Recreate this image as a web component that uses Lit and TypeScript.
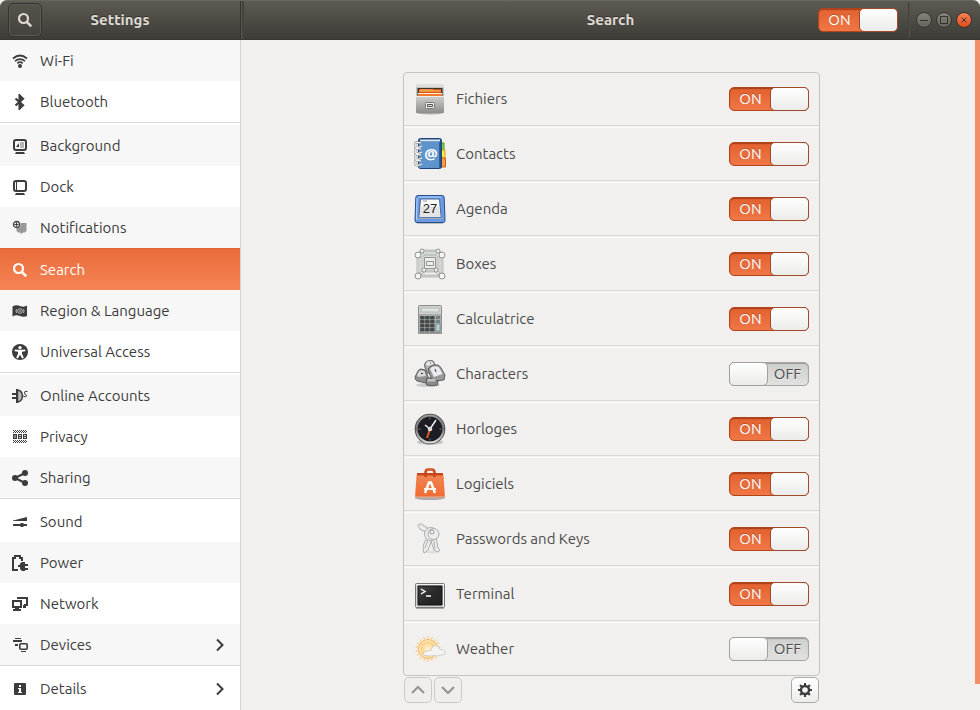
import { LitElement, html, css, svg, nothing, TemplateResult } from "lit";
import { customElement, property } from "lit/decorators.js";
import { classMap } from "lit/directives/class-map.js";

const monitor = svg`<rect x="2" y="2" width="12" height="10" rx="2" fill="none" stroke="currentColor" stroke-width="2"/><path d="M4 14h8l1 2H3z" fill="currentColor"/>`;

const magnifier = svg`<circle cx="6.500" cy="6.500" r="4.500" fill="none" stroke="currentColor" stroke-width="2.200"/><path d="M9.800 9.800L14.300 14.300" stroke="currentColor" stroke-width="2.600"/>`;

const dots: number[][] = [];
for (let y = 0; y < 3; y++) for (let x = 0; x < 14; x++) if ((x + y) % 2 === 0) dots.push([x + 1, y]);

const glyphs: Record<string, TemplateResult> = {
  search: magnifier,
  wifi: svg`<g fill="none" stroke="currentColor" stroke-width="1.700"><path d="M1 5.500Q8 -.5 15 5.500"/><path d="M3 8.200Q8 4 13 8.200"/><path d="M5.300 10.300Q8 8 10.700 10.300"/></g><circle cx="8" cy="13" r="2" fill="currentColor"/>`,
  bluetooth: svg`<path d="M3.500 4.500L11 11.300L8 14V2L11 4.700L3.500 11.500" fill="none" stroke="currentColor" stroke-width="2.200"/><path d="M6.500 0l2.500 1v14l-2.500 1z" fill="currentColor"/>`,
  background: svg`${monitor}<path d="M8 4h4v6H8z" fill="#b5b5b5"/><path d="M4 9l3-4v4z" fill="currentColor"/><path d="M7.500 4v6" stroke="#fff"/>`,
  dock: svg`${monitor}<path d="M4 3h1v8H4z" fill="currentColor"/>`,
  notifications: svg`<path d="M6 3h8.500v8l-1.500 1.500h-2L9.500 14 8 12.500H6L4.500 11V8.500A4.500 4.500 0 0 0 8.500 3z" fill="#999"/><circle cx="4.500" cy="4.500" r="3" fill="#fff" stroke="currentColor" stroke-width="1.300"/><path d="M4.500 2.500v4M2.500 4.500h4" stroke="currentColor" stroke-width="1.200"/>`,
  region: svg`<path d="M.5 3.500Q4 1.500 8 3T15 2.500V13Q12 14.500 8 13T.5 13.500z" fill="currentColor"/><g fill="none" stroke="#d8d8d8" stroke-width=".8"><circle cx="8" cy="8" r="2.300"/><path d="M4.500 6Q3.500 8 4.500 10M11.500 6Q12.500 8 11.500 10"/></g><circle cx="8" cy="8" r=".8" fill="#d8d8d8"/>`,
  access: svg`<circle cx="8" cy="8" r="8" fill="currentColor"/><circle cx="8" cy="3.600" r="1.700" fill="#fff"/><path d="M2.700 5.500L6 5.800h4l3.300-.3v1.700L10 7.800v2l1.800 4-1.600.7L8 10.700l-2.200 3.800-1.600-.7L6 9.800v-2L2.700 7.200z" fill="#fff"/>`,
  accounts: svg`<path d="M0 5h5v2H0zM0 9h5v2H0zM4 1h2v14H4z" fill="currentColor"/><path d="M5.500 2C12 3 12 13 5.500 14z" fill="#bbb" stroke="currentColor" stroke-width="1.400"/><path d="M15.500 3.500Q12 2.500 12.500 5T15 7.500Q14 10 11 8" fill="none" stroke="currentColor"/>`,
  privacy: svg`<g fill="currentColor" shape-rendering="crispEdges">${dots.map(([x, y]) => svg`<rect x=${x} y=${y + 1} width="1" height="1"/><rect x=${x} y=${y + 11} width="1" height="1"/>`)}<path d="M1 5h4v5H1zM6 5h4v5H6zM11 5h4v5h-4z"/></g><path d="M3 6v3M7 6.500h2M7 8.500h2M12 6.500h2M12 8.500h2" stroke="#fff" stroke-width=".8"/>`,
  sharing: svg`<path d="M13 3L3 8l10 5" fill="none" stroke="currentColor" stroke-width="2"/><g fill="currentColor"><circle cx="3" cy="8" r="3"/><circle cx="13" cy="3" r="3"/><circle cx="13" cy="13" r="3"/></g>`,
  sound: svg`<path d="M1 6.500L15 3v4H1zM1 10h14v2H1zM8 10l1-1h2l1 1v2l-1 1H9l-1-1z" fill="currentColor"/>`,
  power: svg`<path d="M6 15H1V3h2V1h5v2h2v3" fill="none" stroke="currentColor" stroke-width="2"/><path d="M6 10h2V8.500L10 7h3v2h3v2h-3v2h3v2h-3v1h-3l-2-2v-2H6z" fill="currentColor"/>`,
  network: svg`<path d="M6 3V2h9v7h-3" fill="none" stroke="currentColor" stroke-width="2"/><path d="M11 9h2v1h1v2h-3z" fill="currentColor"/><rect x="1" y="5" width="8" height="6" fill="none" stroke="currentColor" stroke-width="2"/><path d="M3 12h4v1h2v2H1v-2h2z" fill="currentColor"/>`,
  devices: svg`<path d="M3 1h6v1H3zM1 3h9v2H7V4.500 5H1zM3 7h3v2H3zM9 14h5v1H9z" fill="currentColor"/><rect x="7.800" y="6.800" width="7.400" height="5.400" rx="1" fill="none" stroke="currentColor" stroke-width="1.600"/>`,
  details: svg`<rect x="2" y="2" width="12" height="12" rx="1" fill="currentColor"/><path d="M7 4h2v2H7zM6 7h3v4h1v1H6v-1h1V8H6z" fill="#fff"/>`,
  next: svg`<path d="M5 2.500L10.500 8 5 13.500" fill="none" stroke="currentColor" stroke-width="2"/>`,
  up: svg`<path d="M2 11l6-6 6 6" fill="none" stroke="currentColor" stroke-width="2"/>`,
  down: svg`<path d="M2 5l6 6 6-6" fill="none" stroke="currentColor" stroke-width="2"/>`,
  gear: svg`<circle cx="8" cy="8" r="4" fill="none" stroke="currentColor" stroke-width="2.400"/><g stroke="currentColor" stroke-width="2">${[0, 45, 90, 135, 180, 225, 270, 315].map(a => svg`<path d="M8 1v2.800" transform="rotate(${a} 8 8)"/>`)}</g>`,
};

const pads = [0, 1, 2, 3].flatMap(r => [0, 1, 2].map(c => [6 + c * 5, 13 + r * 4]));

const apps: Record<string, TemplateResult> = {
  files: svg`<defs><linearGradient id="f" x2="0" y2="1"><stop stop-color="#d0d0ce"/><stop offset="1" stop-color="#8d8d8b"/></linearGradient></defs>
    <ellipse cx="16" cy="30" rx="13" ry="1.500" fill="#aaa"/><path d="M3 1h26l1 4v25H2V5z" fill="#c2c2c0"/><path d="M3 1h26l1 3H2z" fill="#dededc"/>
    <path d="M3.500 5h25v9h-25z" fill="#3a322b"/><path d="M5 6h22v7H5z" fill="#d7541c"/><path d="M5 8h22M6 7h13" stroke="#f8a24c" stroke-width="1.300"/><path d="M4 10.500h24" stroke="#fff1d0"/><path d="M4 12h24" stroke="#f47a30" stroke-width="2"/>
    <rect x="2" y="13" width="28" height="17" rx="1" fill="url(#f)"/><path d="M2 13.500h28" stroke="#eee"/><rect x="11.500" y="19.500" width="9" height="6" rx="1" fill="#eee" stroke="#777"/><path d="M13.500 21.500h5v2h-5z" fill="#ddd" stroke="#555"/>`,
  contacts: svg`<path d="M27 5h3v7h-3z" fill="#8ed04a" stroke="#4d9a18"/><path d="M27 12h4v8h-4z" fill="#fde84e" stroke="#d0a400"/><path d="M27 20h4.500v9H27z" fill="#fa9b46" stroke="#d36010"/>
    <rect x="4.500" y=".5" width="23" height="30" rx="2" fill="#214f8c" stroke="#1c457d"/><path d="M6 1.500h20v2H6z" fill="#dce9f8"/><rect x="5" y="4" width="21" height="26" rx="1" fill="#5e93cb"/><path d="M25.500 4v26" stroke="#2f609e"/>
    <text x="17" y="21" text-anchor="middle" class="at">@</text>
    <g fill="none" stroke="#888" stroke-width="2.400">${[6, 12, 18, 24].map(y => svg`<path d="M8 ${y + 2}Q1 ${y + 5} 1 ${y + 1}T7 ${y - 1}"/>`)}</g><g fill="none" stroke="#f3f3f3" stroke-width="1.300">${[6, 12, 18, 24].map(y => svg`<path d="M8 ${y + 2}Q1 ${y + 5} 1 ${y + 1}T7 ${y - 1}"/>`)}</g>`,
  calendar: svg`<path d="M3 30h26" stroke="#bbb" stroke-width="2"/><path d="M4 2.500h24q2 0 2.200 2l.8 23q0 2-2 2H3q-2 0-2-2l.8-23q.2-2 2.200-2z" fill="#6b9be2" stroke="#274e90"/><path d="M4.500 4h23M3 5L2.500 27" stroke="#b9d5fb" fill="none"/>
    <path d="M6.500 6h19l1.500 18H5z" fill="#fafafa" stroke="#43649c"/><path d="M6.500 14h19l1 10h-21z" fill="#e4e4e4"/><path d="M4 25.500h24" stroke="#aaa"/><path d="M9 8h4" stroke="#999"/><text x="16" y="20" text-anchor="middle" class="day">27</text>`,
  boxes: svg`<g fill="none" stroke="#8f958d" stroke-width="2.600"><path d="M8 3h16v20H8zM4 7h24v21H4zM4 7l4-4M28 7l-4-4M4 28l7-6M28 28l-7-6"/></g>
    <g fill="none" stroke="#f4f5f3" stroke-width="1.200"><path d="M8 3h16v20H8zM4 7h24v21H4zM4 7l4-4M28 7l-4-4M4 28l7-6M28 28l-7-6"/></g>
    <path d="M10.500 9.500h11v11h-11zM12.500 13.500h7v4h-7z" fill="#eceeeb" stroke="#8f958d"/>
    <g fill="#f4f5f3" stroke="#858b83" stroke-width=".9">${[[8, 3, 2], [24, 3, 2], [10, 22, 2], [22, 22, 2], [4, 7, 3], [28, 7, 3], [4, 28, 3], [28, 28, 3]].map(([x, y, r]) => svg`<circle cx=${x} cy=${y} r=${r}/>`)}</g>`,
  calculator: svg`<path d="M4 30h24" stroke="#999" stroke-width="2"/><rect x="4.500" y="2.500" width="23" height="27" rx="1" fill="#aaacaa" stroke="#8c8e8c"/><path d="M5 3h22v8H5z" fill="#cfd1cf"/><path d="M7 5h18v4H7z" fill="#dfe3dd" stroke="#b5b8b4"/>
    ${pads.map(([x, y]) => svg`<rect x=${x} y=${y} width="4.600" height="3.400" rx="1" fill="#454a4b"/>`)}<path d="M22 13h4v3h-4zM22 17h4v3h-4z" fill="#6e8187"/><path d="M22 21h4v7h-4z" fill="#b9cfd4" stroke="#6c868d" stroke-width=".7"/>`,
  characters: svg`<ellipse cx="14" cy="27" rx="12" ry="2" fill="#ccc"/><g stroke="#555" stroke-width=".9" stroke-linejoin="round">
    <path d="M10.500 8q0-4 3-5l4-.5q2 0 3 3l1 6-8 4z" fill="#b0b0b0"/>
    <path d="M1 19l3-6q1-2 3-2l4 1 4 9-3 4-9-2q-2-1-2-4z" fill="#8f8f8f"/>
    <path d="M12 23l1-3h9l2 3-.5 4q-5 1.500-11 0z" fill="#8a8a8a"/>
    <path d="M14 11q2-3 5-4l5 0q2 1 3 3l4 7-1 5-9 1-4-3z" fill="#999"/></g>
    <path d="M12 7q0-3 2-3.500l3-.3q2 0 2.500 3l-6 1.500z" fill="#e9e9e9"/><path d="M3 17l2-3.500q1-1.500 3-1l2.500.5 1.500 5-8 1z" fill="#dadada"/><path d="M14 21h7l1 2.500h-9z" fill="#c4c4c4"/><path d="M16 11q2-2.500 4-2.700l3.500.2q1.500.5 2.500 2.500l2.500 5-8.500 3z" fill="#e9e9ee"/><path d="M21 11l1 3M7 15.500h2M16 5h1" stroke="#333"/>`,
  clock: svg`<defs><linearGradient id="c" x2="0" y2="1"><stop stop-color="#999"/><stop offset=".5" stop-color="#777"/><stop offset="1" stop-color="#ddd"/></linearGradient></defs><ellipse cx="16" cy="29" rx="13" ry="3" fill="#c4c4c4"/><circle cx="16" cy="16" r="13.800" fill="#1d1d25" stroke="#444" stroke-width="3"/><circle cx="16" cy="16" r="13.500" fill="none" stroke="url(#c)" stroke-width="2"/><path d="M16 4.500v2M16 25.500v2M4.500 16h2M25.500 16h2" stroke="#777"/>
    <path d="M16 16l-3 9" stroke="#e8581c" stroke-width="2"/><path d="M16 16l6-9M16 16l-5-4" stroke="#f5f5f5" stroke-width="1.400"/><circle cx="16" cy="16" r="2.300" fill="#ddd"/>`,
  software: svg`<defs><linearGradient id="s" x2="0" y2="1"><stop stop-color="#f08450"/><stop offset="1" stop-color="#f06a30"/></linearGradient></defs><ellipse cx="16" cy="30" rx="15" ry="2" fill="#aaa"/><path d="M3 5h26v5H3z" fill="#c9451a"/><path d="M2.500 7.500h27L31 29.500H1z" fill="url(#s)"/><path d="M1 29h30" stroke="#d8baa9"/><path d="M11.500 9V4.500q0-3 3-3h3q3 0 3 3V9" fill="none" stroke="#c9451a" stroke-width="2.500"/><path d="M12 3q1-2 4-2t4 2" fill="none" stroke="#ef7440"/>
    <g stroke="#fff" stroke-width="2.400" fill="none"><path d="M11 25l4-10.500h2L21 25"/><path d="M10 21h12" stroke-width="1.800"/></g>`,
  keys: svg`<ellipse cx="18" cy="29" rx="8" ry="1.500" fill="#ddd"/><g stroke="#a5a5a5" stroke-width=".9" fill="#ededed" stroke-linejoin="round"><path d="M4 2l3-1 8 5-1 4-8-4z" fill="none" stroke-width="1.500" stroke="#c4c4c4"/><path d="M12 16l4-3 2 3-4 11-4 3-1-3 1-2-1-2z"/><path d="M16 15l6-1 2 11 2 2-2 2-4-2z"/><circle cx="17" cy="11" r="6.500"/><circle cx="19.500" cy="11" r="5.500"/><circle cx="18" cy="9" r="2" fill="#f7f7f7" stroke="#888"/><path d="M14 17l-3 8M20 18l1 8"/></g>`,
  terminal: svg`<defs><linearGradient id="t" x2="1" y2="1"><stop stop-color="#494949"/><stop offset=".5" stop-color="#292929"/><stop offset="1" stop-color="#222"/></linearGradient></defs><path d="M2 30.500h28" stroke="#aaa"/><rect x="1.500" y="5.500" width="29" height="24" rx="1" fill="#d4d4d4" stroke="#777"/><path d="M2.500 6.500h27v22" fill="none" stroke="#f2f2f2"/><path d="M4 8h24v19H4z" fill="url(#t)" stroke="#111"/><path d="M7 11l4 2.500L7 16M12 18h5" fill="none" stroke="#fff" stroke-width="1.400"/>`,
  weather: svg`<defs><radialGradient id="w"><stop stop-color="#fff3d6"/><stop offset="1" stop-color="#fac56f"/></radialGradient></defs><g stroke="#f8cf85" stroke-width="1.500">${Array.from({ length: 18 }, (_, i) => svg`<path d="M14 3.500v2" transform="rotate(${i * 20} 14 16)"/>`)}</g><circle cx="14" cy="16" r="9.500" fill="url(#w)" stroke="#f5b85e"/><circle cx="14" cy="16" r="8.300" fill="none" stroke="#fff0cb"/>
    <path d="M11 22.500q-3-1-1-3 1-2 3-1 2-2 4-1 1-5 5-5 3 0 4 4 3 0 5 2 1 3-2 3l-3 1q-3 1-5 0-5 1-10 0z" fill="#f4f4f2" stroke="#c5c5c5" stroke-width=".8"/>`,
};

@customElement("line-icon")
class LineIcon extends LitElement {
  @property() name = "";
  static styles = css`:host { display: block; flex: none; width: 16px; height: 16px; } .glyph { display: block; width: 16px; height: 16px; }`;
  render() {
    return html`<svg class="glyph" viewBox="0 0 16 16" aria-hidden="true">${glyphs[this.name]}</svg>`;
  }
}

@customElement("app-icon")
class AppIcon extends LitElement {
  @property() name = "";
  static styles = css`
    :host { display: block; flex: none; width: 32px; height: 32px; }
    .picture { display: block; width: 32px; height: 32px; }
    .at { font: bold 15px "Noto Sans", sans-serif; fill: #fff; }
    .day { font: 13px "Liberation Sans", sans-serif; fill: #222; }
  `;
  render() {
    return html`<svg class="picture" viewBox="0 0 32 32" aria-hidden="true">${apps[this.name]}</svg>`;
  }
}

interface Panel { id: string; label: string; more?: boolean; }

const groups: Panel[][] = [
  [{ id: "wifi", label: "Wi-Fi" }, { id: "bluetooth", label: "Bluetooth" }],
  [
    { id: "background", label: "Background" }, { id: "dock", label: "Dock" }, { id: "notifications", label: "Notifications" },
    { id: "search", label: "Search" }, { id: "region", label: "Region & Language" }, { id: "access", label: "Universal Access" },
  ],
  [{ id: "accounts", label: "Online Accounts" }, { id: "privacy", label: "Privacy" }, { id: "sharing", label: "Sharing" }],
  [
    { id: "sound", label: "Sound" }, { id: "power", label: "Power" }, { id: "network", label: "Network" },
    { id: "devices", label: "Devices", more: true },
  ],
  [{ id: "details", label: "Details", more: true }],
];

interface Provider { id: string; label: string; on: boolean; }

@customElement("app-root")
class AppRoot extends LitElement {
  @property({ attribute: false }) current = "search";
  @property({ attribute: false }) enabled = true;
  @property({ attribute: false }) providers: Provider[] = [
    { id: "files", label: "Fichiers", on: true },
    { id: "contacts", label: "Contacts", on: true },
    { id: "calendar", label: "Agenda", on: true },
    { id: "boxes", label: "Boxes", on: true },
    { id: "calculator", label: "Calculatrice", on: true },
    { id: "characters", label: "Characters", on: false },
    { id: "clock", label: "Horloges", on: true },
    { id: "software", label: "Logiciels", on: true },
    { id: "keys", label: "Passwords and Keys", on: true },
    { id: "terminal", label: "Terminal", on: true },
    { id: "weather", label: "Weather", on: false },
  ];

  static styles = css`
    :host {
      display: flex; flex-direction: column; min-height: 100vh; box-sizing: border-box;
      background: #f1f0ee; color: #3c3c3c; font: 15px/20px Ubuntu, "Noto Sans", sans-serif;
    }
    *, *::before, *::after { box-sizing: border-box; }
    button { padding: 0; margin: 0; font: inherit; display: grid; place-items: center; }
    .bar {
      display: grid; grid-template-columns: 240px 1fr; height: 40px;
      background: linear-gradient(#5d5a52, #3d3c37); border-top: 1px solid #696660; border-bottom: 1px solid #373631;
      border-radius: 7px 7px 0 0; color: #dfdbd2;
    }
    .title { margin: 0; font-size: 15px; line-height: 20px; font-weight: 700; text-align: center; text-shadow: 0 -1px #33322e; }
    .left { display: grid; grid-template-columns: 34px 1fr 34px; align-items: center; padding: 0 8px; }
    .right {
      display: grid; grid-template-columns: 160px 1fr 160px; align-items: center; padding: 0 8px;
      border-left: 1px solid #33322e; box-shadow: inset 1px 0 #5b5850, inset 3px 0 #45433d;
    }
    .find { width: 34px; height: 34px; border: 1px solid #34332f; border-radius: 5px; background: linear-gradient(#56534b, #44423d); color: #dfdbd2; box-shadow: inset 0 0 0 1px #5c5a53; }
    .right .title { grid-column: 2; }
    .tools { display: flex; align-items: center; justify-content: flex-end; gap: 4px; }
    .rule { width: 2px; height: 36px; margin: 0 2px 0 6px; background: linear-gradient(90deg, #3a3934, #595750); }
    .win { width: 16px; height: 16px; border: 1px solid #35342f; border-radius: 50%; background: linear-gradient(#85837b, #65635c); color: #35342f; }
    .win.close { background: linear-gradient(#f58256, #df4c19); }
    .win svg { display: block; width: 14px; height: 14px; fill: none; stroke: currentColor; }

    .body { flex: 1; display: grid; grid-template-columns: 241px 1fr 5px; }
    .side { background: #fff; border-right: 1px solid #d6d5d3; }
    .group + .group { border-top: 1px solid #dadada; padding-top: 2px; }
    .item { display: flex; align-items: center; gap: 12px; height: 41px; padding: 0 12px; color: #3c3c3c; text-decoration: none; }
    .item .label { flex: 1; }
    .item.tint { background: #f7f7f7; }
    .item.active { height: 42px; background: linear-gradient(#e96c3a, #f68355); border-top: 1px solid #df6233; color: #fff; }
    .scroll { height: 644px; background: #f28d67; }

    .main { display: flex; flex-direction: column; align-items: center; padding: 32px 16px 0 23px; }
    .panel { width: 100%; max-width: 417px; }
    .list { list-style: none; margin: 0; padding: 0; border: 1px solid #c5c4c1; border-radius: 4px; }
    .row { display: flex; align-items: center; gap: 10px; height: 52px; padding: 0 10px; }
    .row + .row { height: 55px; border-top: 1px solid #dad9d6; padding-top: 2px; box-shadow: inset 0 1px #f1f0ee, inset 0 2px #fbfbfa; }
    .name { flex: 1; color: #4c4c4c; }

    .switch {
      position: relative; display: flex; flex: none; width: 80px; height: 24px; border: 1px solid #b2441c; border-radius: 5px;
      background: linear-gradient(#e2612f, #f07746); box-shadow: inset 0 1px 1px #a83f1a; color: #fff; line-height: 22px;
    }
    .switch .state { flex: 1; text-align: center; text-shadow: 0 -1px #b95027; }
    .switch .knob { width: 39px; height: 24px; margin: -1px; border: 1px solid #a04a2a; border-radius: 5px; background: linear-gradient(#fff, #ebebea); }
    .switch.off { flex-direction: row-reverse; border-color: #a5a5a3; background: linear-gradient(#cfcfcd, #e1e1e0); box-shadow: inset 0 1px 1px #999; color: #4c4c4c; }
    .switch.off .state { text-shadow: 0 1px #eee; }
    .switch.off .knob { border-color: #a0a09e; }
    .check { position: absolute; inset: 0; width: 100%; height: 100%; margin: 0; opacity: 0; }

    .actions { display: flex; gap: 2px; padding: 1px 1px 0; }
    .act { width: 28px; height: 26px; border: 1px solid #a9a9a6; border-radius: 5px; background: linear-gradient(#fff, #ececeb); color: #3c3c3c; }
    .act:disabled { border-color: #cbcac7; background: #efeeec; color: #96928c; }
    .act.options { margin-left: auto; }
  `;

  private toggle(id: string, on: boolean, change: (v: boolean) => void) {
    return html`<span class=${classMap({ switch: true, off: !on })}>
      <span class="state" aria-hidden="true">${on ? "ON" : "OFF"}</span><span class="knob"></span>
      <input class="check" type="checkbox" role="switch" id=${id} aria-label=${id === "enabled" ? "Search" : nothing} .checked=${on}
        @change=${(e: Event) => change((e.target as HTMLInputElement).checked)} />
    </span>`;
  }

  render() {
    let index = 0;
    return html`
      <header class="bar">
        <div class="left">
          <button class="find" aria-label="Find"><line-icon name="search"></line-icon></button>
          <h2 class="title">Settings</h2>
        </div>
        <div class="right">
          <h1 class="title">Search</h1>
          <div class="tools">
            ${this.toggle("enabled", this.enabled, v => (this.enabled = v))}
            <span class="rule"></span>
            <button class="win" aria-label="Minimize"><svg viewBox="0 0 14 14"><path d="M3 7.500h8"/></svg></button>
            <button class="win" aria-label="Maximize"><svg viewBox="0 0 14 14"><rect x="3.500" y="3.500" width="7" height="7"/></svg></button>
            <button class="win close" aria-label="Close"><svg viewBox="0 0 14 14"><path d="M4.500 4.500l5 5M9.500 4.500l-5 5"/></svg></button>
          </div>
        </div>
      </header>
      <div class="body">
        <nav class="side">
          ${groups.map(g => html`<div class="group">${g.map(p => {
            const tint = index++ % 2 === 0;
            const active = p.id === this.current;
            return html`<a class=${classMap({ item: true, tint, active })} href="#${p.id}" @click=${() => (this.current = p.id)}>
              <line-icon name=${p.id}></line-icon><span class="label">${p.label}</span>
              ${p.more ? html`<line-icon name="next"></line-icon>` : nothing}
            </a>`;
          })}</div>`)}
        </nav>
        <main class="main">
          <div class="panel">
            <ul class="list">
              ${this.providers.map(p => html`<li class="row">
                <app-icon name=${p.id}></app-icon>
                <label class="name" for=${p.id}>${p.label}</label>
                ${this.toggle(p.id, p.on, v => (this.providers = this.providers.map(q => (q.id === p.id ? { ...q, on: v } : q))))}
              </li>`)}
            </ul>
            <div class="actions">
              <button class="act" aria-label="Move up" disabled><line-icon name="up"></line-icon></button>
              <button class="act" aria-label="Move down" disabled><line-icon name="down"></line-icon></button>
              <button class="act options" aria-label="Search locations"><line-icon name="gear"></line-icon></button>
            </div>
          </div>
        </main>
        <div class="scroll"></div>
      </div>
    `;
  }
}
